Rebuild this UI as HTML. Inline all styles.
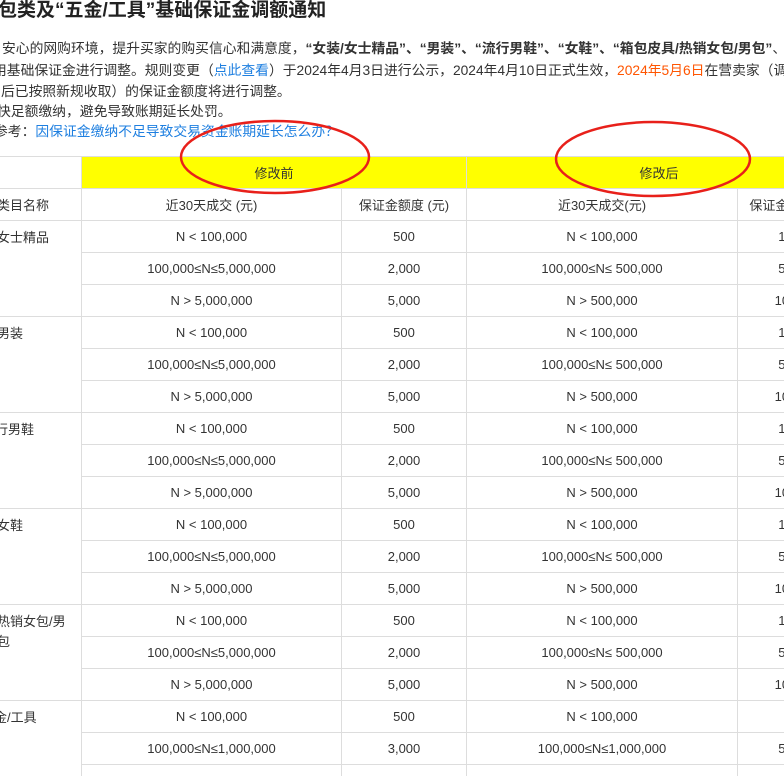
<!DOCTYPE html>
<html><head><meta charset="utf-8"><style>
html,body{margin:0;width:784px;height:784px;overflow:hidden}
body{background:#fff;position:relative;font-family:"Liberation Sans","Noto Sans CJK SC",sans-serif;color:#333}
.t{position:absolute;white-space:nowrap;font-size:13.8px;line-height:20px}
h1{position:absolute;left:-21px;top:-3px;margin:0;font-size:19px;font-weight:bold;color:#222;white-space:nowrap;line-height:28px}
a{color:#1e7fe0;text-decoration:none}
.o{color:#ff5500}
.wrap{position:absolute;left:0;top:0;width:784px;height:776px;overflow:hidden}
table{position:absolute;left:-1px;top:156px;width:852px;border-collapse:collapse;table-layout:fixed;font-size:13px}
td{border:1px solid #ddd;height:31px;padding:0;text-align:center;white-space:nowrap;color:#333}
.y td{background:#ffff00}
td.c{text-align:left;vertical-align:top;overflow:hidden}
td.c div{position:relative;margin-top:7px;line-height:20px}
</style></head><body>
<h1>箱包类及“五金/工具”基础保证金调额通知</h1>
<div class="wrap">
<div class="t" style="left:2px;top:39px">安心的网购环境，提升买家的购买信心和满意度，<b>“女装/女士精品”、“男装”、“流行男鞋”、“女鞋”、“箱包皮具/热销女包/男包”</b>、</div>
<div class="t" style="left:-7px;top:61px">用基础保证金进行调整。规则变更（<a>点此查看</a>）于2024年4月3日进行公示，2024年4月10日正式生效，<span class="o">2024年5月6日</span>在营卖家（调</div>
<div class="t" style="left:1px;top:82px">后已按照新规收取）的保证金额度将进行调整。</div>
<div class="t" style="left:-3px;top:102px">快足额缴纳，避免导致账期延长处罚。</div>
<div class="t" style="left:-6px;top:122px">参考：<a>因保证金缴纳不足导致交易资金账期延长怎么办？</a></div>
<table>
<colgroup><col style="width:82px"><col style="width:260px"><col style="width:125px"><col style="width:271px"><col style="width:114px"></colgroup>
<tr class="y"><td style="background:#fff"></td><td colspan="2">修改前</td><td colspan="2">修改后</td></tr>
<tr><td style="text-align:left;overflow:hidden"><span style="position:relative;left:-3px">类目名称</span></td><td>近30天成交 (元)</td><td>保证金额度 (元)</td><td>近30天成交(元)</td><td>保证金额度 (元)</td></tr>
<tr><td class="c" rowspan="3"><div style="left:-3px">女士精品</div></td><td>N &lt; 100,000</td><td>500</td><td>N &lt; 100,000</td><td>1,000</td></tr>
<tr><td>100,000≤N≤5,000,000</td><td>2,000</td><td>100,000≤N≤ 500,000</td><td>5,000</td></tr>
<tr><td>N &gt; 5,000,000</td><td>5,000</td><td>N &gt; 500,000</td><td>10,000</td></tr>
<tr><td class="c" rowspan="3"><div style="left:-3px">男装</div></td><td>N &lt; 100,000</td><td>500</td><td>N &lt; 100,000</td><td>1,000</td></tr>
<tr><td>100,000≤N≤5,000,000</td><td>2,000</td><td>100,000≤N≤ 500,000</td><td>5,000</td></tr>
<tr><td>N &gt; 5,000,000</td><td>5,000</td><td>N &gt; 500,000</td><td>10,000</td></tr>
<tr><td class="c" rowspan="3"><div style="left:-5px">行男鞋</div></td><td>N &lt; 100,000</td><td>500</td><td>N &lt; 100,000</td><td>1,000</td></tr>
<tr><td>100,000≤N≤5,000,000</td><td>2,000</td><td>100,000≤N≤ 500,000</td><td>5,000</td></tr>
<tr><td>N &gt; 5,000,000</td><td>5,000</td><td>N &gt; 500,000</td><td>10,000</td></tr>
<tr><td class="c" rowspan="3"><div style="left:-3px">女鞋</div></td><td>N &lt; 100,000</td><td>500</td><td>N &lt; 100,000</td><td>1,000</td></tr>
<tr><td>100,000≤N≤5,000,000</td><td>2,000</td><td>100,000≤N≤ 500,000</td><td>5,000</td></tr>
<tr><td>N &gt; 5,000,000</td><td>5,000</td><td>N &gt; 500,000</td><td>10,000</td></tr>
<tr><td class="c" rowspan="3"><div style="left:-3px">热销女包/男<br>包</div></td><td>N &lt; 100,000</td><td>500</td><td>N &lt; 100,000</td><td>1,000</td></tr>
<tr><td>100,000≤N≤5,000,000</td><td>2,000</td><td>100,000≤N≤ 500,000</td><td>5,000</td></tr>
<tr><td>N &gt; 5,000,000</td><td>5,000</td><td>N &gt; 500,000</td><td>10,000</td></tr>
<tr><td class="c" rowspan="3"><div style="left:-6px">金/工具</div></td><td>N &lt; 100,000</td><td>500</td><td>N &lt; 100,000</td><td></td></tr>
<tr><td>100,000≤N≤1,000,000</td><td>3,000</td><td>100,000≤N≤1,000,000</td><td>5,000</td></tr>
<tr><td>N &gt; 1,000,000</td><td>10,000</td><td>N &gt; 1,000,000</td><td>10,000</td></tr>
</table>
<svg style="position:absolute;left:0;top:0" width="784" height="784">
<ellipse cx="275" cy="157" rx="94" ry="36" fill="none" stroke="#e8201a" stroke-width="2.5"/>
<ellipse cx="653" cy="159" rx="97" ry="37" fill="none" stroke="#e8201a" stroke-width="2.5"/>
</svg>
</div>
</body></html>
